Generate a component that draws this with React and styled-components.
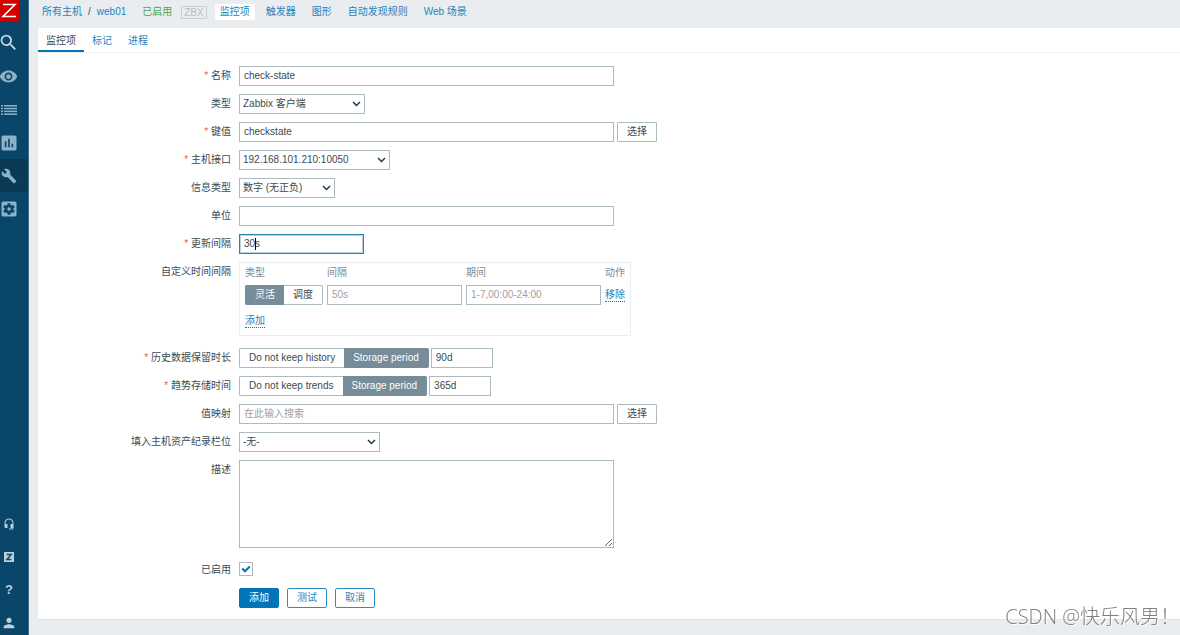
import React from 'react';
import styled, { createGlobalStyle, css } from 'styled-components';
import {
  MdSearch,
  MdVisibility,
  MdAssessment,
  MdBuild,
  MdSettingsApplications,
  MdHeadsetMic,
  MdPerson,
} from 'react-icons/md';

const GlobalStyle = createGlobalStyle`
  *, *::before, *::after {
    box-sizing: border-box;
  }

  body {
    margin: 0;
    background: #e9edf0;
    color: #3c4a52;
    font-family: "Liberation Sans", "Noto Sans CJK SC", sans-serif;
    font-size: 10px;
    line-height: 16px;
  }

  button, input, select, textarea {
    margin: 0;
    color: inherit;
    font: inherit;
  }

  a {
    color: #1f83bd;
    text-decoration: none;
  }
`;

const Page = styled.div`
  display: flex;
  min-height: 100vh;
`;

/* サイドバー */

const Sidebar = styled.aside`
  display: flex;
  flex: none;
  flex-direction: column;
  justify-content: space-between;
  width: 29px;
  background: #0a466a;
  border-right: 1px solid #3f6e8a;
`;

const SideGroup = styled.nav`
  display: flex;
  flex-direction: column;
`;

const Logo = styled.a`
  display: block;
  width: 19px;
  height: 21px;
  margin-bottom: 3px;

  svg {
    display: block;
  }
`;

const SideItem = styled.a`
  display: flex;
  align-items: center;
  justify-content: center;
  height: ${({ $tall }) => ($tall ? 36 : 33)}px;
  padding-right: 11px;
  color: #8db2c8;
  background: ${({ $active }) => ($active ? '#0b3a57' : 'transparent')};

  svg {
    flex: none;
  }
`;

const SideFooter = styled(SideGroup)`
  gap: 9px;
`;

const FooterItem = styled(SideItem)`
  height: 24px;
  padding-right: 10px;
  color: #b9d0dd;
  font-size: 13px;
  font-weight: bold;
`;

/* ヘッダー */

const Main = styled.main`
  flex: 1;
  min-width: 0;
  padding: 0 0 15px 9px;
`;

const TopBar = styled.header`
  display: flex;
  align-items: center;
  height: 28px;
  padding: 0 4px 4px;
  white-space: nowrap;
`;

const Crumbs = styled.nav`
  display: flex;
  gap: 6px;
`;

const Enabled = styled.span`
  margin-left: 16px;
  color: #4fa64f;
`;

const Badge = styled.span`
  margin-left: 9px;
  padding: 0 2px;
  border: 1px solid #c8cdd0;
  border-radius: 1px;
  color: #b8bec2;
  line-height: 11px;
`;

const SubNav = styled.nav`
  display: flex;
  gap: 6px;
  margin-left: 8px;

  a {
    padding: 0 5px;
    border-radius: 2px;
  }

  a[aria-current] {
    background: #fff;
  }
`;

const Card = styled.section`
  background: #fff;
  border: solid #dfe4e7;
  border-width: 0 0 1px;
`;

const Tabs = styled.nav`
  display: flex;
  height: 25px;
  border-bottom: 1px solid #f0f2f4;
`;

const Tab = styled.a`
  padding: 5px 8px 0;
  border-bottom: 2px solid ${({ $active }) => ($active ? '#0275b8' : 'transparent')};
  ${({ $active }) => $active && 'color: #3c4a52;'}
`;

/* フォーム */

const Form = styled.form`
  display: flex;
  flex-direction: column;
  gap: 8px;
  padding: 13px 8px 11px 0;
`;

const Row = styled.div`
  display: flex;
  gap: 8px;
`;

const labelStyle = css`
  flex: 0 0 193px;
  line-height: 20px;
  text-align: right;
  white-space: nowrap;

  ${({ $required }) =>
    $required &&
    css`
      &::before {
        content: '* ';
        color: #e45959;
      }
    `}
`;

const Label = styled.label`
  ${labelStyle}
`;

const GroupLabel = styled.span`
  ${labelStyle}
`;

const Controls = styled.div`
  display: flex;
  flex: 1;
  min-width: 0;
  gap: ${({ $gap = 3 }) => $gap}px;
`;

const fieldStyle = css`
  border: 1px solid #acbbc2;
  border-radius: 0;
  outline: none;
  background: #fff;

  &::placeholder {
    color: #a0a0a0;
    opacity: 1;
  }

  &:focus {
    border-color: #0275b8;
  }
`;

const Input = styled.input`
  ${fieldStyle}
  width: ${({ $width = '375px' }) => $width};
  height: 20px;
  padding: 0 4px 1px;
  ${({ $active }) =>
    $active &&
    css`
      border-color: #2f80ab;
      box-shadow: inset 0 0 0 1px #b5d3e3;
    `}
`;

const TextArea = styled.textarea`
  ${fieldStyle}
  display: block;
  width: 375px;
  height: 88px;
  padding: 4px;
`;

const CaretField = styled.div`
  position: relative;
`;

const Caret = styled.span`
  position: absolute;
  top: 4px;
  left: 16px;
  width: 1px;
  height: 12px;
  background: #000;
`;

const SelectBox = styled.div`
  position: relative;
  width: ${({ $width }) => $width};

  select {
    ${fieldStyle}
    width: 100%;
    height: 20px;
    padding: 0 16px 0 3px;
    appearance: none;
  }

  svg {
    position: absolute;
    top: 7px;
    right: 4px;
    pointer-events: none;
  }
`;

const buttonStyle = css`
  height: 20px;
  padding: 0 9px;
  border: 1px solid #acbbc2;
  border-radius: 2px;
  background: #fff;
  line-height: 18px;
  cursor: pointer;
`;

const PickButton = styled.button`
  ${buttonStyle}
  border-radius: 1px;
`;

const ActionButton = styled.button`
  ${buttonStyle}
  border-color: #2f8dc4;
  color: ${({ $primary }) => ($primary ? '#fff' : '#1f83bd')};
  ${({ $primary }) => $primary && 'background: #0275b8; border-color: #0275b8;'}
`;

const Actions = styled.div`
  display: flex;
  gap: 8px;
  padding-left: 201px;
`;

const Segments = styled.div`
  display: inline-flex;
  vertical-align: top;
  white-space: nowrap;

  label {
    position: relative;
    height: 20px;
    padding: 0 9px;
    border: 1px solid #acbbc2;
    line-height: 18px;
  }

  label:first-child {
    border-right: 0;
    border-radius: 2px 0 0 2px;
  }

  label:last-child {
    border-left: 0;
    border-radius: 0 2px 2px 0;
  }

  label:has(:checked) {
    border-color: #768d99;
    background: #768d99;
    color: #fff;
  }

  input {
    position: absolute;
    inset: 0;
    opacity: 0;
  }
`;

const IntervalBox = styled.div`
  margin-bottom: 4px;
  padding: 0 1px;
  border: 1px solid #ebeef0;
`;

const IntervalTable = styled.table`
  border-spacing: 4px;

  th, td {
    padding: 0;
    text-align: left;
    vertical-align: top;
    white-space: nowrap;
  }

  th {
    height: 14px;
    color: #768d99;
    font-weight: normal;
    line-height: 12px;
  }

  tbody td {
    height: 22px;
  }

  tfoot td {
    height: 20px;
  }
`;

const DottedLink = styled.button`
  height: 14px;
  margin-top: 3px;
  padding: 0;
  border: 0;
  border-bottom: 1px dotted #0275b8;
  background: none;
  color: #1f83bd;
  line-height: 13px;
  vertical-align: top;
  cursor: pointer;
`;

const CheckRow = styled(Row)`
  padding-top: 4px;
`;

const Check = styled.span`
  position: relative;
  width: 14px;
  height: 14px;
  margin-top: 2px;

  input {
    display: block;
    width: 14px;
    height: 14px;
    border: 1px solid #acbbc2;
    background: #fff;
    appearance: none;
  }

  svg {
    position: absolute;
    inset: 0;
    opacity: 0;
    pointer-events: none;
  }

  input:checked + svg {
    opacity: 1;
  }
`;

const Watermark = styled.div`
  position: fixed;
  right: 0;
  bottom: 6px;
  color: #7d8184;
  font-family: "Open Sans", "Noto Sans CJK SC", sans-serif;
  font-size: 20px;
  font-weight: 300;
  line-height: 24px;
  text-shadow: 1px 1px 0 #fff;
  white-space: nowrap;
  pointer-events: none;
`;

function ListIcon() {
  return (
    <svg width="16" height="10" viewBox="0 0 16 10" fill="currentColor">
      {[0, 2.8, 5.6, 8.4].map(y => (
        <React.Fragment key={y}>
          <rect x="0" y={y} width="2" height="1.5" />
          <rect x="3" y={y} width="13" height="1.5" />
        </React.Fragment>
      ))}
    </svg>
  );
}

function ShareIcon() {
  return (
    <svg width="10" height="10" viewBox="0 0 10 10">
      <rect width="10" height="10" fill="currentColor" />
      <path d="M2.7 2.5h4.6L2.9 7.5h4.5" fill="none" stroke="#0a466a" strokeWidth="1.4" />
    </svg>
  );
}

function Select({ id, width, options }) {
  return (
    <SelectBox $width={width}>
      <select id={id}>
        {options.map(option => <option key={option}>{option}</option>)}
      </select>
      <svg width="9" height="6" viewBox="0 0 9 6" fill="none" stroke="#2b363c" strokeWidth="1.5">
        <path d="M1 1l3.5 3.5L8 1" />
      </svg>
    </SelectBox>
  );
}

function Segmented({ name, options, selected }) {
  return (
    <Segments role="radiogroup">
      {options.map((option, i) => (
        <label key={option}>
          <input type="radio" name={name} defaultChecked={i === selected} />
          {option}
        </label>
      ))}
    </Segments>
  );
}

const menu = [
  { id: 'monitoring', icon: <MdVisibility size={19} /> },
  { id: 'inventory', icon: <ListIcon /> },
  { id: 'reports', icon: <MdAssessment size={20} /> },
  { id: 'configuration', icon: <MdBuild size={16} />, active: true },
  { id: 'administration', icon: <MdSettingsApplications size={20} /> },
];

const support = [
  { id: 'support', icon: <MdHeadsetMic size={12} /> },
  { id: 'share', icon: <ShareIcon /> },
  { id: 'help', icon: '?' },
  { id: 'user', icon: <MdPerson size={16} /> },
];

const subPages = ['监控项', '触发器', '图形', '自动发现规则', 'Web 场景'];

function App() {
  return (
    <Page>
      <GlobalStyle />
      <Sidebar>
        <SideGroup>
          <Logo href="#home">
            <svg width="19" height="21" viewBox="0 0 19 21">
              <rect width="19" height="21" fill="#d40000" />
              <path d="M3 4.5h12L3 16.5h13" fill="none" stroke="#fff" strokeWidth="1.6" />
            </svg>
          </Logo>
          <SideItem href="#search" $tall>
            <MdSearch size={21} color="#c3d7e2" />
          </SideItem>
          {menu.map(item => (
            <SideItem key={item.id} href={`#${item.id}`} $active={item.active}>
              {item.icon}
            </SideItem>
          ))}
        </SideGroup>
        <SideFooter>
          {support.map(item => (
            <FooterItem key={item.id} href={`#${item.id}`}>{item.icon}</FooterItem>
          ))}
        </SideFooter>
      </Sidebar>

      <Main>
        <TopBar>
          <Crumbs>
            <a href="#hosts">所有主机</a>
            <span>/</span>
            <a href="#web01">web01</a>
          </Crumbs>
          <Enabled>已启用</Enabled>
          <Badge>ZBX</Badge>
          <SubNav>
            {subPages.map((name, i) => (
              <a key={name} href={`#${name}`} aria-current={i === 0 ? 'page' : undefined}>{name}</a>
            ))}
          </SubNav>
        </TopBar>

        <Card>
          <Tabs>
            <Tab href="#item" $active>监控项</Tab>
            <Tab href="#tags">标记</Tab>
            <Tab href="#process">进程</Tab>
          </Tabs>

          <Form onSubmit={e => e.preventDefault()}>
            <Row>
              <Label htmlFor="name" $required>名称</Label>
              <Controls><Input id="name" defaultValue="check-state" /></Controls>
            </Row>
            <Row>
              <Label htmlFor="type">类型</Label>
              <Controls><Select id="type" width="126px" options={['Zabbix 客户端']} /></Controls>
            </Row>
            <Row>
              <Label htmlFor="key" $required>键值</Label>
              <Controls>
                <Input id="key" defaultValue="checkstate" />
                <PickButton type="button">选择</PickButton>
              </Controls>
            </Row>
            <Row>
              <Label htmlFor="interface" $required>主机接口</Label>
              <Controls><Select id="interface" width="151px" options={['192.168.101.210:10050']} /></Controls>
            </Row>
            <Row>
              <Label htmlFor="value-type">信息类型</Label>
              <Controls><Select id="value-type" width="96px" options={['数字 (无正负)']} /></Controls>
            </Row>
            <Row>
              <Label htmlFor="units">单位</Label>
              <Controls><Input id="units" /></Controls>
            </Row>
            <Row>
              <Label htmlFor="delay" $required>更新间隔</Label>
              <CaretField>
                <Input id="delay" $width="125px" $active defaultValue="30s" />
                <Caret />
              </CaretField>
            </Row>
            <Row>
              <GroupLabel>自定义时间间隔</GroupLabel>
              <IntervalBox>
                <IntervalTable>
                  <thead>
                    <tr>
                      <th>类型</th>
                      <th>间隔</th>
                      <th>期间</th>
                      <th>动作</th>
                    </tr>
                  </thead>
                  <tbody>
                    <tr>
                      <td><Segmented name="interval" options={['灵活', '调度']} selected={0} /></td>
                      <td><Input $width="135px" placeholder="50s" aria-label="间隔" /></td>
                      <td><Input $width="135px" placeholder="1-7,00:00-24:00" aria-label="期间" /></td>
                      <td><DottedLink type="button">移除</DottedLink></td>
                    </tr>
                  </tbody>
                  <tfoot>
                    <tr>
                      <td colSpan={4}><DottedLink type="button">添加</DottedLink></td>
                    </tr>
                  </tfoot>
                </IntervalTable>
              </IntervalBox>
            </Row>
            <Row>
              <Label htmlFor="history" $required>历史数据保留时长</Label>
              <Controls $gap={2}>
                <Segmented name="history-mode" options={['Do not keep history', 'Storage period']} selected={1} />
                <Input id="history" $width="62px" defaultValue="90d" />
              </Controls>
            </Row>
            <Row>
              <Label htmlFor="trends" $required>趋势存储时间</Label>
              <Controls $gap={2}>
                <Segmented name="trends-mode" options={['Do not keep trends', 'Storage period']} selected={1} />
                <Input id="trends" $width="62px" defaultValue="365d" />
              </Controls>
            </Row>
            <Row>
              <Label htmlFor="valuemap">值映射</Label>
              <Controls>
                <Input id="valuemap" placeholder="在此输入搜索" />
                <PickButton type="button">选择</PickButton>
              </Controls>
            </Row>
            <Row>
              <Label htmlFor="inventory-link">填入主机资产纪录栏位</Label>
              <Controls><Select id="inventory-link" width="141px" options={['-无-']} /></Controls>
            </Row>
            <Row>
              <Label htmlFor="description">描述</Label>
              <Controls><TextArea id="description" /></Controls>
            </Row>
            <CheckRow>
              <Label htmlFor="enabled">已启用</Label>
              <Check>
                <input id="enabled" type="checkbox" defaultChecked />
                <svg width="14" height="14" viewBox="0 0 14 14" fill="none" stroke="#0275b8" strokeWidth="2">
                  <path d="M3.2 6.5l2.8 2.8 4.8-4.8" />
                </svg>
              </Check>
            </CheckRow>
            <Actions>
              <ActionButton type="submit" $primary>添加</ActionButton>
              <ActionButton type="button">测试</ActionButton>
              <ActionButton type="button">取消</ActionButton>
            </Actions>
          </Form>
        </Card>
      </Main>
      <Watermark>CSDN @快乐风男！</Watermark>
    </Page>
  );
}

export default App;
